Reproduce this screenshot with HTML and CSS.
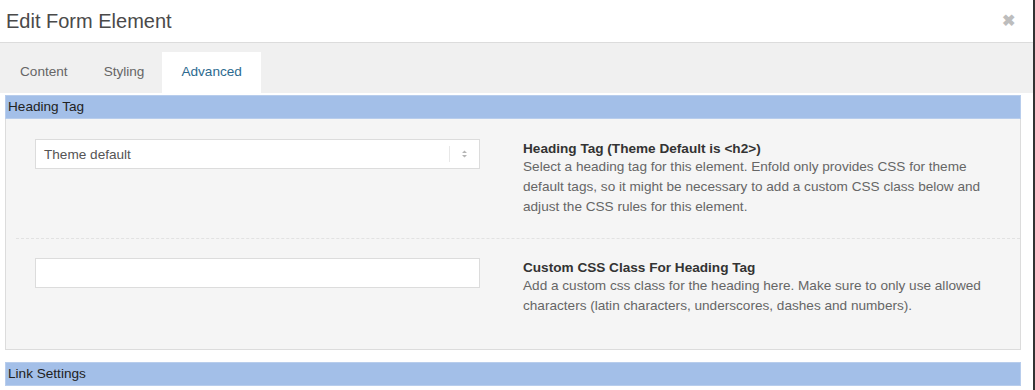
FILE: index.html
```html
<!DOCTYPE html>
<html lang="en">

<head>
    <meta charset="UTF-8">
    <meta name="viewport" content="width=device-width, initial-scale=1.0">
    <title>Edit Form Element</title>
    <link rel="stylesheet" href="styles.css">
</head>

<body>
    <div class="modal">
        <div class="modal-header">
            <h1>Edit Form Element</h1>
            <span class="close">&#10006;</span>
        </div>
        <div class="tabs">
            <span class="tab">Content</span>
            <span class="tab">Styling</span>
            <span class="tab active">Advanced</span>
        </div>
        <div class="modal-body">
            <div class="section-title">Heading Tag</div>
            <div class="section">
                <div class="row">
                    <div class="field">
                        <div class="select">
                            <span>Theme default</span>
                            <span class="arrows">
                                <svg width="7" height="10" viewBox="0 0 7 10">
                                    <path d="M1 4 L3.5 1.5 L6 4 Z M1 6 L3.5 8.5 L6 6 Z" fill="#b5b5b5" />
                                </svg>
                            </span>
                        </div>
                    </div>
                    <div class="desc">
                        <h4>Heading Tag (Theme Default is &lt;h2&gt;)</h4>
                        <p>Select a heading tag for this element. Enfold only provides CSS for theme default tags, so it might be necessary to add a custom CSS class below and adjust the CSS rules for this element.</p>
                    </div>
                </div>
                <div class="row">
                    <div class="field">
                        <input type="text" class="text-input">
                    </div>
                    <div class="desc">
                        <h4>Custom CSS Class For Heading Tag</h4>
                        <p>Add a custom css class for the heading here. Make sure to only use allowed characters (latin characters, underscores, dashes and numbers).</p>
                    </div>
                </div>
            </div>
            <div class="section-title">Link Settings</div>
        </div>
    </div>
</body>

</html>
```

FILE: styles.css
```css
body {
    font-family: "Liberation Sans", Arial, sans-serif;
    margin: 0;
    padding: 0;
    background-color: #fff;
}

.modal {
    height: 390px;
    overflow: hidden;
    border-right: 2px solid #333;
    box-sizing: border-box;
}

.modal-header {
    display: flex;
    justify-content: space-between;
    align-items: center;
    height: 42px;
    padding: 0 18px 0 6px;
    border-bottom: 1px solid #dcdcdc;
}

.modal-header h1 {
    margin: 0;
    font-size: 20px;
    font-weight: normal;
    color: #4a4a4a;
}

.close {
    color: #bdbdbd;
    font-size: 16px;
    font-weight: bold;
    margin-top: -2px;
}

.tabs {
    display: flex;
    align-items: flex-end;
    height: 50px;
    padding-left: 2px;
    background-color: #f0f0f0;
}

.tab {
    padding: 0 18px;
    height: 41px;
    line-height: 40px;
    font-size: 13.6px;
    color: #666;
}

.tab.active {
    background-color: #fff;
    color: #2d6a8f;
    padding: 0 19px;
}

.modal-body {
    padding: 2px 12px 0 5px;
}

.section-title {
    background-color: #a3bfe8;
    border: 1px solid #b8cdec;
    font-size: 13.6px;
    color: #222;
    height: 22px;
    line-height: 22px;
    padding-left: 2px;
}

.section {
    background-color: #f5f5f5;
    border: 1px solid #dcdcdc;
    border-top: none;
    padding: 0 0 0 10px;
    margin-bottom: 12px;
}

.row {
    display: flex;
    align-items: flex-start;
    padding: 20px 0 21px 19px;
}

.row + .row {
    border-top: 1px dashed #e2e2e2;
    padding-top: 19px;
    padding-bottom: 33px;
}

.field {
    width: 445px;
    flex-shrink: 0;
}

.select {
    display: flex;
    justify-content: space-between;
    align-items: center;
    height: 28px;
    background-color: #fff;
    border: 1px solid #dcdcdc;
    padding-left: 8px;
    font-size: 13.6px;
    color: #555;
}

.arrows {
    display: flex;
    align-items: center;
    justify-content: center;
    width: 29px;
    height: 16px;
    border-left: 1px solid #e8e8e8;
}

.text-input {
    display: block;
    width: 100%;
    height: 30px;
    box-sizing: border-box;
    border: 1px solid #dcdcdc;
    background-color: #fff;
    margin: 0;
}

.desc {
    width: 460px;
    margin-left: 43px;
}

.desc h4 {
    margin: 2px 0 0;
    font-size: 13.6px;
    line-height: 16px;
    color: #333;
}

.desc p {
    margin: 0;
    font-size: 13.6px;
    line-height: 20px;
    color: #666;
}
```
